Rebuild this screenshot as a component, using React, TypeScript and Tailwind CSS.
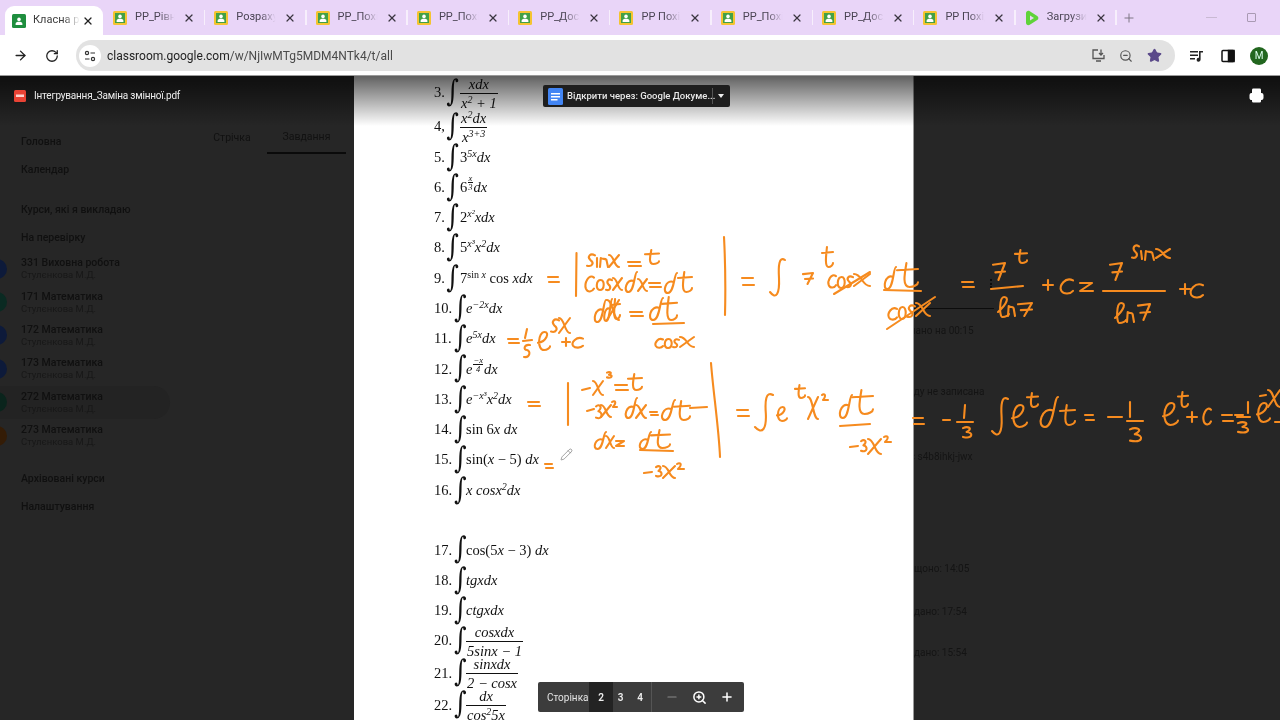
import React from "react";
import { ArrowRight, RotateCw, X, Plus, Minus, ZoomIn, ZoomOut, Star, Printer, Pencil } from "lucide-react";

const Favicon = ({ active }: { active?: boolean }) => (
  <svg width="14" height="14" viewBox="0 0 14 14" className="shrink-0">
    <rect x="0" y="0" width="14" height="14" rx="1.5" fill={active ? "#1e8e3e" : "#f4c430"} />
    <rect x="2" y="2" width="10" height="10" fill={active ? "#1e8e3e" : "#43a047"} />
    <circle cx="7" cy="5.4" r="1.8" fill="#fff" />
    <path d="M3.6 11v-1.2c0-1.4 1.6-2 3.4-2s3.4.6 3.4 2V11z" fill="#fff" />
  </svg>
);

const PlayIcon = () => (
  <svg width="14" height="16" viewBox="0 0 14 16" className="shrink-0">
    <path d="M1 3.2C1 1.2 3 .2 4.8 1.2l7.4 4.7c1.6 1 1.6 3.2 0 4.2l-7.4 4.7C3 15.8 1 14.8 1 12.8z" fill="#5fd33a" />
    <path d="M5 5.5v5l4-2.5z" fill="#e9d5f7" />
  </svg>
);

const tabs = ["РР_Рівня", "Розрахун", "РР_Похід", "РР_Похід", "РР_Дослі", "РР Похід", "РР_Похід", "РР_Дослі", "РР Похід"];

const Tab = ({ title, play }: { title: string; play?: boolean }) => (
  <div className="flex items-center w-[101.3px] h-[35px] pl-[9px] shrink-0 relative">
    {play ? <PlayIcon /> : <Favicon />}
    <span className="ml-[8px] w-[44px] overflow-hidden whitespace-nowrap text-[11px] text-[#4a4453] [mask-image:linear-gradient(to_right,black_55%,transparent_90%)]">
      {title}
    </span>
    <X size={12} strokeWidth={2.4} className="ml-[4px] text-[#3a3540]" />
    <div className="absolute right-0 top-[10px] h-[15px] w-[1.5px] bg-[#f7effc]" />
  </div>
);

const navItem = "h-[28px] flex items-center pl-[21px] text-[10.5px] font-medium text-[#101010] blur-[0.6px] whitespace-nowrap";

const courses = [
  { t: "331 Виховна робота", c: "bg-[#0d1a3a]" },
  { t: "171 Математика", c: "bg-[#0a2a22]" },
  { t: "172 Математика", c: "bg-[#0d1a3a]" },
  { t: "173 Математика", c: "bg-[#0d1a3a]" },
  { t: "272 Математика", c: "bg-[#0a241c]" },
  { t: "273 Математика", c: "bg-[#341c06]" },
];

const Sup = ({ children }: { children: React.ReactNode }) => (
  <sup className="text-[10px] leading-none relative -top-[5px] align-baseline italic">{children}</sup>
);

const Frac = ({ a, b }: { a: React.ReactNode; b: React.ReactNode }) => (
  <span className="inline-flex flex-col items-center leading-[18px] align-middle">
    <span className="px-[1px] italic">{a}</span>
    <span className="px-[1px] border-t border-[#111] w-full text-center italic whitespace-nowrap">{b}</span>
  </span>
);

const Tiny = ({ a, b }: { a: string; b: string }) => (
  <span className="inline-flex flex-col items-center text-[8.5px] leading-[8px] relative -top-[6px] align-middle italic mx-[1px]">
    <span>{a}</span>
    <span className="border-t border-[#111] w-full text-center">{b}</span>
  </span>
);

const Row = ({ n, h, children, sep = "." }: { n: number; h: string; children: React.ReactNode; sep?: string }) => (
  <div className={`flex items-center whitespace-nowrap ${h}`}>
    <span className={n >= 10 ? "w-[19px]" : "w-[11px]"}>
      {n}
      {sep}
    </span>
    <span className={`text-[30px] leading-none relative -top-[2px] font-['DejaVu_Serif',serif] [transform:scaleX(0.8)] ${n >= 10 ? "w-[13px]" : "w-[15px]"}`}>∫</span>
    <span>{children}</span>
  </div>
);

const eq = (x: number, y: number, w: number, g = 5) => `M${x} ${y}h${w}M${x + 1} ${y + g}h${w}`;
const C = (x: number, y: number, w: number, h: number) =>
  `M${x + w} ${y + h * 0.15}C${x + w * 0.4} ${y - h * 0.1} ${x - w * 0.1} ${y + h * 0.5} ${x + w * 0.1} ${y + h * 0.8}C${x + w * 0.3} ${y + h * 1.05} ${x + w * 0.8} ${y + h} ${x + w} ${y + h * 0.8}`;
const O = (x: number, y: number, w: number, h: number) =>
  `M${x + w * 0.6} ${y}C${x} ${y} ${x - w * 0.1} ${y + h} ${x + w * 0.5} ${y + h}C${x + w * 1.1} ${y + h} ${x + w * 1.1} ${y} ${x + w * 0.6} ${y}`;
const XX = (x: number, y: number, w: number, h: number) => `M${x} ${y}C${x + w * 0.5} ${y} ${x + w * 0.5} ${y + h} ${x + w} ${y + h}M${x + w} ${y}L${x} ${y + h}`;
const T = (x: number, y: number, w: number, h: number) =>
  `M${x + w * 0.45} ${y}C${x + w * 0.35} ${y + h * 0.5} ${x + w * 0.25} ${y + h} ${x + w * 0.6} ${y + h}C${x + w * 0.8} ${y + h} ${x + w} ${y + h * 0.9} ${x + w} ${y + h * 0.8}M${x} ${y + h * 0.3}L${x + w} ${y + h * 0.25}`;
const D = (x: number, y: number, w: number, h: number) =>
  `M${x + w * 0.75} ${y + h * 0.45}C${x + w * 0.2} ${y + h * 0.3} ${x - w * 0.1} ${y + h} ${x + w * 0.35} ${y + h}C${x + w * 0.8} ${y + h} ${x + w * 0.8} ${y} ${x + w} ${y}`;
const E = (x: number, y: number, w: number, h: number) =>
  `M${x} ${y + h * 0.6}C${x + w * 0.7} ${y + h * 0.55} ${x + w} ${y} ${x + w * 0.55} ${y}C${x} ${y} ${x - w * 0.1} ${y + h} ${x + w * 0.5} ${y + h}C${x + w * 0.8} ${y + h} ${x + w} ${y + h * 0.85} ${x + w} ${y + h * 0.8}`;
const S = (x: number, y: number, w: number, h: number) =>
  `M${x + w} ${y + h * 0.1}C${x + w * 0.4} ${y - h * 0.1} ${x} ${y + h * 0.2} ${x + w * 0.4} ${y + h * 0.45}C${x + w} ${y + h * 0.7} ${x + w * 0.6} ${y + h} ${x} ${y + h * 0.9}`;
const N = (x: number, y: number, w: number, h: number) => `M${x} ${y + h}L${x + w * 0.1} ${y}C${x + w * 0.4} ${y + h * 0.2} ${x + w * 0.6} ${y} ${x + w * 0.8} ${y + h * 0.2}L${x + w} ${y + h}`;
const Seven = (x: number, y: number, w: number, h: number) => `M${x} ${y + h * 0.1}L${x + w} ${y}L${x + w * 0.45} ${y + h}M${x + w * 0.2} ${y + h * 0.55}L${x + w} ${y + h * 0.5}`;
const Three = (x: number, y: number, w: number, h: number) =>
  `M${x} ${y + h * 0.1}C${x + w * 0.5} ${y - h * 0.1} ${x + w * 1.2} ${y + h * 0.1} ${x + w * 0.4} ${y + h * 0.45}C${x + w * 1.2} ${y + h * 0.5} ${x + w * 1.1} ${y + h * 1.1} ${x} ${y + h * 0.9}`;
const L = (x: number, y: number, w: number, h: number) =>
  `M${x} ${y + h * 0.75}C${x + w * 0.9} ${y + h * 0.3} ${x + w} ${y} ${x + w * 0.55} ${y}C${x + w * 0.1} ${y} ${x + w * 0.1} ${y + h} ${x + w * 0.4} ${y + h}C${x + w * 0.7} ${y + h} ${x + w} ${y + h * 0.9} ${x + w} ${y + h * 0.85}`;
const Int = (x: number, y: number, w: number, h: number) =>
  `M${x + w} ${y + h * 0.05}C${x + w * 0.6} ${y - h * 0.05} ${x + w * 0.55} ${y + h * 0.2} ${x + w * 0.6} ${y + h * 0.5}C${x + w * 0.65} ${y + h * 0.9} ${x + w * 0.4} ${y + h * 1.05} ${x} ${y + h * 0.85}`;
const Ln = (x1: number, y1: number, x2: number, y2: number) => `M${x1} ${y1}L${x2} ${y2}`;

const ink = [
  // row 9
  eq(548, 277, 10),
  Ln(576.5, 253, 576, 296),
  S(587, 254, 8, 13), Ln(597, 258, 597, 267), N(600, 258, 8, 9), XX(609, 255, 10, 12),
  eq(628, 262, 12, 4),
  T(645, 250, 14, 14),
  C(585, 275, 9, 17), O(596, 280, 8, 10), S(606, 279, 6, 12), XX(613, 278, 9, 12),
  D(624, 272, 13, 20), XX(638, 279, 9, 12), eq(649, 283, 11, 4),
  D(663, 273, 14, 20), T(678, 272, 14, 20),
  D(593, 300, 13, 22), D(603, 299, 9, 22), XX(607, 300, 12, 20), T(611, 299, 9, 20), eq(630, 312, 12, 4),
  D(648, 298, 15, 22), T(662, 297, 15, 23), Ln(653, 324, 684, 323),
  C(655, 338, 8, 10), O(664, 339, 8, 9), S(673, 339, 6, 9), XX(680, 337, 14, 10),
  "M724 237Q726 275 725 315",
  eq(742, 278, 11, 7),
  Int(770, 258, 15, 40),
  Seven(803, 273, 10, 11),
  T(822, 247, 11, 20),
  C(828, 274, 8, 14), O(837, 277, 8, 11), S(846, 276, 7, 12), XX(854, 274, 16, 12), Ln(834, 294, 870, 272),
  D(883, 267, 13, 22), T(897, 263, 21, 24), Ln(884, 290, 921, 291),
  C(888, 307, 9, 13), O(898, 307, 8, 12), S(907, 305, 8, 13), XX(916, 303, 14, 13), Ln(887, 329, 935, 297),
  // continuation row 9 on dark
  eq(962, 282, 11, 5),
  Seven(993, 263, 12, 17), T(1015, 250, 12, 13), Ln(991, 289, 1023, 286),
  L(998, 297, 11, 20), N(1008, 306, 7, 10), Seven(1018, 303, 14, 13),
  "M1043 285h10M1048 280v10",
  C(1060, 278, 13, 16),
  "M1080 283h12l-12 8h13",
  Seven(1110, 263, 12, 17), Ln(1103, 291, 1165, 291),
  S(1132, 245, 7, 14), Ln(1141, 251, 1142, 259), N(1145, 251, 9, 9), XX(1156, 249, 14, 9),
  L(1115, 303, 11, 20), N(1127, 312, 7, 10), Seven(1138, 304, 12, 16),
  "M1180 289h10M1185 284v10",
  C(1190, 283, 13, 15),
  // row 11
  eq(508, 339, 10, 4),
  Ln(527, 329, 525, 338), Ln(523, 341, 532, 340), "M530 345C524 344 523 350 527 350C531 351 530 358 524 357",
  E(538, 332, 12, 18),
  S(551, 319, 8, 14), XX(559, 318, 11, 15),
  "M562 342h8M566 338v8", C(572, 337, 11, 11),
  // row 13
  eq(528, 402, 11, 4),
  Ln(568, 383, 568, 425),
  Ln(582, 390, 590, 388), XX(593, 381, 10, 14), Three(607, 372, 5, 6),
  eq(615, 385, 12, 5),
  T(628, 374, 14, 16),
  Ln(587, 411, 594, 409), Three(596, 405, 6, 14), XX(601, 405, 10, 12), "M612 402c3-2 5 0 1 5h4",
  D(624, 398, 13, 20), XX(636, 405, 10, 13), eq(650, 412, 7, 3),
  D(660, 400, 15, 20), T(674, 401, 16, 19), "M690 408l17-1",
  D(593, 432, 13, 17), XX(606, 436, 8, 12), "M616 441h8l-8 5h8",
  D(638, 432, 13, 17), T(651, 430, 19, 18), Ln(640, 450, 673, 451),
  Ln(644, 473, 652, 472), Three(656, 466, 6, 11), XX(663, 466, 12, 12), "M677 464c3-2 6 0 1 5h6",
  "M711 363C713 390 719 430 720 457",
  eq(737, 410, 11, 6),
  Int(755, 393, 18, 40),
  E(777, 407, 10, 14),
  T(795, 385, 10, 13),
  XX(808, 397, 10, 22), "M822 395c2-2 5 0 1 5h5",
  D(838, 395, 14, 23), T(852, 390, 21, 24), Ln(840, 426, 870, 424),
  Ln(850, 447, 858, 446), Three(861, 440, 6, 12), XX(868, 439, 13, 15), "M884 437c3-2 6 0 1 5h6",
  // row 15
  eq(545, 464, 7, 4),
  // continuation row 13 on dark
  eq(913, 418, 10, 6),
  Ln(943, 420, 950, 420),
  Ln(965, 405, 964, 418), Ln(957, 422, 973, 422), Three(963, 427, 9, 11),
  Int(992, 397, 16, 40),
  E(1012, 405, 15, 22),
  T(1027, 393, 11, 14),
  D(1038, 397, 20, 30), T(1060, 405, 15, 20),
  eq(1085, 415, 8, 5),
  Ln(1108, 417, 1122, 417),
  Ln(1130, 402, 1130, 417), Ln(1127, 421, 1143, 421), Three(1130, 428, 12, 14),
  E(1163, 403, 15, 22),
  T(1178, 392, 10, 15),
  "M1187 417h10M1192 412v10",
  C(1203, 407, 8, 18),
  eq(1222, 415, 10, 6),
  Ln(1235, 415, 1243, 415),
  Ln(1248, 402, 1248, 413), Ln(1237, 417, 1250, 417), Three(1238, 422, 11, 11),
  E(1257, 403, 13, 19),
  Ln(1260, 396, 1266, 395), XX(1268, 390, 12, 17),
  "M1275 422h8",
];

export default function App() {
  return (
    <div className="w-[1280px] h-[720px] overflow-hidden flex flex-col font-['Roboto','Noto_Sans',sans-serif] relative blur-[0.4px]">
      {/* tab strip */}
      <div className="h-[35px] shrink-0 bg-[#e9d5f8] flex items-end pl-[5px]">
        <div className="w-[98px] h-[29px] bg-white rounded-t-[9px] flex items-center pl-[7px] shrink-0 mr-[1px]">
          <Favicon active />
          <span className="ml-[7px] w-[47px] overflow-hidden whitespace-nowrap text-[11px] text-[#3c3c3c] [mask-image:linear-gradient(to_right,black_65%,transparent)]">Класна р</span>
          <X size={12} strokeWidth={2.6} className="ml-[2px] text-[#222]" />
        </div>
        <div className="flex h-[35px] items-center">
          {tabs.map((t, i) => (
            <Tab key={i} title={t} />
          ))}
          <Tab title="Загрузить" play />
          <Plus size={14} strokeWidth={1.6} className="ml-[5px] text-[#77707e]" />
          <div className="w-[11px] h-px bg-[#c9b9d3] ml-[70px]" />
          <div className="w-[9px] h-[9px] border border-[#a99ab3] rounded-[1px] ml-[30px]" />
        </div>
      </div>

      {/* toolbar */}
      <div className="h-[41px] shrink-0 bg-white flex items-center border-b border-[#9a9a9a] pt-[1px]">
        <ArrowRight size={15} strokeWidth={2.2} className="ml-[13px] text-[#222]" />
        <RotateCw size={14} strokeWidth={2.2} className="ml-[17px] text-[#222]" />
        <div className="ml-[17px] w-[1099px] h-[31px] bg-[#e2e2e2] rounded-full flex items-center pl-[3px]">
          <div className="w-[22px] h-[22px] rounded-full bg-white flex items-center justify-center">
            <svg width="12" height="12" viewBox="0 0 12 12" fill="none" stroke="#333" strokeWidth="1.2">
              <circle cx="3" cy="3" r="1.6" />
              <path d="M6.5 3H11M1 9h4.5" />
              <circle cx="9" cy="9" r="1.6" />
            </svg>
          </div>
          <span className="ml-[6px] text-[12px] text-[#4a4a4a]">
            <span className="text-[#222]">classroom.google.com</span>/w/NjIwMTg5MDM4NTk4/t/all
          </span>
          <div className="ml-auto flex items-center pr-[13px] gap-[13px]">
            <svg width="15" height="15" viewBox="0 0 15 15" fill="none" stroke="#555" strokeWidth="1.3">
              <path d="M7 2H2v8.5h11V7M5 13h5" />
              <path d="M10 1.5v5M8 5l2 2 2-2" />
            </svg>
            <ZoomOut size={14} strokeWidth={2} className="text-[#555]" />
            <Star size={15} className="text-[#5b4a8a] fill-[#5b4a8a] ml-[1px]" />
          </div>
        </div>
        <div className="flex items-center ml-[15px]">
          <svg width="14" height="14" viewBox="0 0 14 14" fill="#222">
            <path d="M0 2h8v1.4H0zM0 5.5h8v1.4H0zM0 9h5v1.4H0z" />
            <path d="M9 2h4v1.6h-2.4v7a2 2 0 1 1-1.6-1.9z" />
          </svg>
          <svg width="14" height="14" viewBox="0 0 14 14" className="ml-[17px]" fill="none" stroke="#111" strokeWidth="1.5">
            <rect x="1" y="1.5" width="12" height="11" rx="1" />
            <rect x="7.5" y="1.5" width="5.5" height="11" fill="#111" />
          </svg>
          <div className="w-[18px] h-[18px] ml-[15px] rounded-full bg-[#22661f] text-[#dfe] text-[10px] flex items-center justify-center">M</div>
        </div>
      </div>

      {/* viewer */}
      <div className="flex-1 flex relative bg-[#262626] overflow-hidden">
        {/* dim page, left */}
        <div className="w-[354px] shrink-0 flex">
          <div className="w-[197px] shrink-0 pt-[52px]">
            <div className={navItem}>Головна</div>
            <div className={navItem}>Календар</div>
            <div className={`${navItem} mt-[12px]`}>Курси, які я викладаю</div>
            <div className={navItem}>На перевірку</div>
            {courses.map((c, i) => (
              <div key={i} className={`h-[33.4px] flex items-center relative ${i === 4 ? "bg-[#232323] rounded-r-full w-[170px]" : ""}`}>
                <div className={`w-[20px] h-[20px] rounded-full -ml-[13px] shrink-0 ${c.c}`} />
                <div className="ml-[14px] blur-[0.6px] whitespace-nowrap">
                  <div className="text-[10.5px] font-medium leading-[12px] text-[#101010]">{c.t}</div>
                  <div className="text-[9.5px] leading-[11px] text-[#181818]">Стулєнкова М.Д.</div>
                </div>
              </div>
            ))}
            <div className={`${navItem} mt-[12.6px]`}>Архівовані курси</div>
            <div className={navItem}>Налаштування</div>
          </div>
          <div className="mt-[46px] h-[32px] flex text-[10.5px] text-[#111] blur-[0.4px]">
            <div className="w-[70px] flex items-center justify-center">Стрічка</div>
            <div className="w-[79px] flex items-center justify-center border-b-[2px] border-[#0a0a0a]">Завдання</div>
          </div>
        </div>

        {/* pdf page */}
        <div className="w-[559px] shrink-0 bg-white pl-[80px] font-['Liberation_Serif',serif] text-[14.5px] text-[#111]">
          <Row n={3} h="h-[34px]">
            <Frac a="xdx" b={<>x<Sup>2</Sup> + 1</>} />
          </Row>
          <Row n={4} h="h-[34px]" sep=",">
            <Frac a={<>x<Sup>2</Sup>dx</>} b={<>x<Sup>3+3</Sup></>} />
          </Row>
          <Row n={5} h="h-[28.5px]">3<Sup>5x</Sup><i>dx</i></Row>
          <Row n={6} h="h-[30.3px]">6<Tiny a="x" b="3" /><i>dx</i></Row>
          <Row n={7} h="h-[30.3px]">2<Sup>x²</Sup><i>xdx</i></Row>
          <Row n={8} h="h-[30.3px]">5<Sup>x³</Sup><i>x</i><Sup>2</Sup><i>dx</i></Row>
          <Row n={9} h="h-[30.3px]">7<Sup><span className="not-italic">sin</span> x</Sup> cos <i>xdx</i></Row>
          <Row n={10} h="h-[30.3px]"><i>e</i><Sup>−2x</Sup><i>dx</i></Row>
          <Row n={11} h="h-[30.3px]"><i>e</i><Sup>5x</Sup><i>dx</i></Row>
          <Row n={12} h="h-[30.3px]"><i>e</i><Tiny a="−x" b="4" /><i>dx</i></Row>
          <Row n={13} h="h-[30.3px]"><i>e</i><Sup>−x³</Sup><i>x</i><Sup>2</Sup><i>dx</i></Row>
          <Row n={14} h="h-[30.3px]">sin 6<i>x dx</i></Row>
          <Row n={15} h="h-[30.3px]">sin(<i>x</i> − 5) <i>dx</i></Row>
          <Row n={16} h="h-[30.3px]"><i>x cosx</i><Sup>2</Sup><i>dx</i></Row>
          <div className="h-[29.5px]" />
          <Row n={17} h="h-[30.3px]">cos(5<i>x</i> − 3) <i>dx</i></Row>
          <Row n={18} h="h-[30.3px]"><i>tgxdx</i></Row>
          <Row n={19} h="h-[30.3px]"><i>ctgxdx</i></Row>
          <Row n={20} h="h-[30.3px]"><Frac a="cosxdx" b="5sinx − 1" /></Row>
          <Row n={21} h="h-[34px]"><Frac a="sinxdx" b="2 − cosx" /></Row>
          <Row n={22} h="h-[30px]"><Frac a="dx" b={<>cos<Sup>2</Sup>5x</>} /></Row>
        </div>

        {/* dim page, right */}
        <div className="flex-1 border-l-[1px] border-[#9a9a9a] pt-[232px] whitespace-nowrap overflow-hidden text-[10px] text-[#141414]">
          <div className="w-[80px] h-px bg-[#0c0c0c]" />
          <div className="h-[14px] mt-[14px] -ml-[10px] blur-[0.6px]">плано на 00:15</div>
          <div className="h-[14px] mt-[47px] -ml-[6px] blur-[0.6px]">йду не записана</div>
          <div className="h-[14px] mt-[51px] -ml-[10px] blur-[0.6px]">пс s4b8ihkj-jwx</div>
          <div className="h-[14px] mt-[98px] blur-[0.6px]">щоно: 14:05</div>
          <div className="h-[14px] mt-[29px] blur-[0.6px]">дано: 17:54</div>
          <div className="h-[14px] mt-[27px] blur-[0.6px]">дано: 15:54</div>
        </div>

        {/* viewer header */}
        <div className="absolute left-0 top-0 w-full h-[50px] bg-gradient-to-b from-[rgba(0,0,0,0.62)] to-transparent flex items-start pt-[14px] pointer-events-none">
          <svg width="12" height="12" viewBox="0 0 12 12" className="ml-[14px] shrink-0">
            <rect width="12" height="12" rx="1.5" fill="#e94335" />
            <rect x="2" y="4.5" width="8" height="2.5" fill="#fbd4d0" />
          </svg>
          <span className="ml-[8px] text-[10px] tracking-[-0.2px] leading-[12px] text-[#ececec]">Інтегрування_Заміна змінної.pdf</span>
          <Printer size={15} strokeWidth={2.4} className="absolute left-[1248.5px] top-[12px] text-white fill-white" />
        </div>

        {/* open with */}
        <div className="absolute left-[543px] top-[9px] w-[187px] h-[22px] bg-[#1e1e1e] rounded-[2px] flex items-center pl-[5px]">
          <svg width="15" height="17" viewBox="0 0 15 17">
            <rect width="15" height="17" rx="1.5" fill="#4285f4" />
            <path d="M3 5h9v1.4H3zM3 8h9v1.4H3zM3 11h6.5v1.4H3z" fill="#fff" />
          </svg>
          <span className="ml-[4px] text-[9.5px] font-medium text-[#e8e8e8] whitespace-nowrap">Відкрити через: Google Докуме...</span>
          <div className="absolute left-[169px] top-[3px] h-[16px] w-px bg-[#555]" />
          <div className="absolute left-[175px] top-[9px] w-0 h-0 border-l-[3.5px] border-r-[3.5px] border-t-[4px] border-l-transparent border-r-transparent border-t-[#eee]" />
        </div>

        {/* page controls */}
        <div className="absolute left-[538px] top-[606px] w-[206px] h-[30px] bg-[#3c3c3c] rounded-[2px] flex items-center text-[#eee] text-[10px]">
          <span className="pl-[9px] w-[51px] text-[#e4e4e4]">Сторінка</span>
          <div className="w-[24px] h-full bg-[#232323] flex items-center justify-center font-semibold">2</div>
          <div className="w-[15px] text-center font-semibold">3</div>
          <div className="w-[24px] text-center font-semibold">4</div>
          <div className="w-px h-full bg-[#555] ml-[-1px]" />
          <Minus size={14} className="ml-[13px] text-[#888]" />
          <ZoomIn size={15} strokeWidth={2.4} className="ml-[13px] text-white" />
          <Plus size={14} strokeWidth={2.6} className="ml-[13px] text-white" />
        </div>

        {/* pen cursor */}
        <Pencil size={13} strokeWidth={1} className="absolute left-[560px] top-[372px] text-[#555]" />

        {/* small menu dots on the dim page */}
        <div className="absolute left-[990px] top-[203px] flex flex-col gap-[1.5px]">
          <div className="w-[2px] h-[2px] bg-[#0c0c0c]" />
          <div className="w-[2px] h-[2px] bg-[#0c0c0c]" />
          <div className="w-[2px] h-[2px] bg-[#0c0c0c]" />
        </div>

        {/* handwritten ink drawn over the document */}
        <svg width="1280" height="644" viewBox="0 76 1280 644" fill="none" stroke="#f68b1f" strokeWidth="2.1" strokeLinecap="round" strokeLinejoin="round" className="absolute left-0 top-0 pointer-events-none">
          {ink.map((d, i) => (
            <path key={i} d={d} />
          ))}
        </svg>
      </div>
    </div>
  );
}
